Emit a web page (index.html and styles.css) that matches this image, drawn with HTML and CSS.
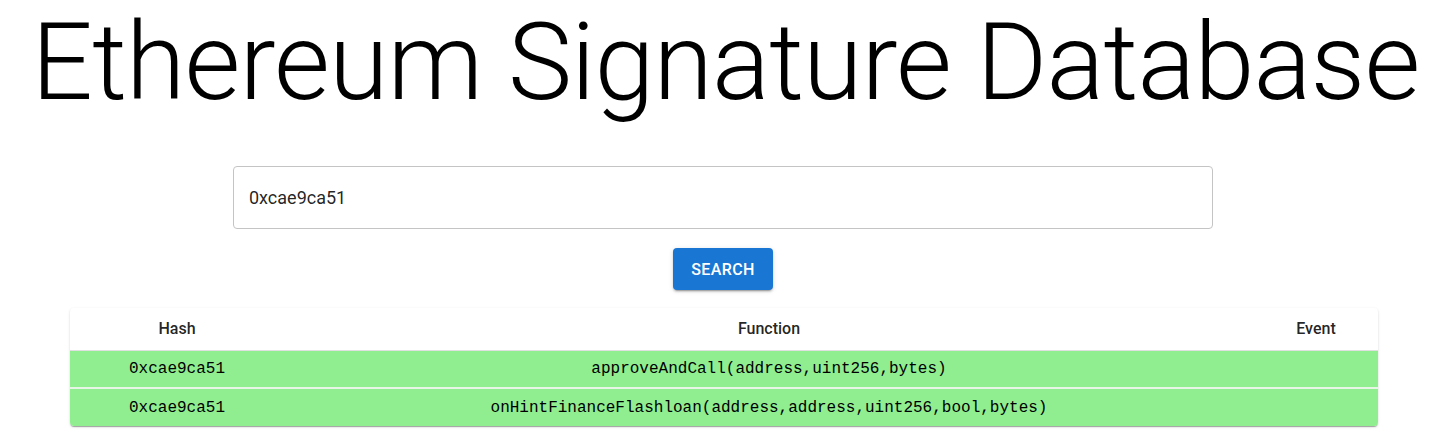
FILE: index.html
```html
<!DOCTYPE html>
<html>
<head>
<meta charset="utf-8">
<link rel="stylesheet" href="styles.css">
</head>
<body>
<div class="page">
  <h1 class="title">Ethereum Signature Database</h1>
  <div class="search">
    <div class="input">0xcae9ca51</div>
    <button class="btn">SEARCH</button>
  </div>
  <div class="paper">
    <table class="table">
      <colgroup><col class="c1"><col class="c2"><col class="c3"></colgroup>
      <thead>
        <tr><th>Hash</th><th>Function</th><th>Event</th></tr>
      </thead>
      <tbody>
        <tr class="hit"><td>0xcae9ca51</td><td>approveAndCall(address,uint256,bytes)</td><td></td></tr>
        <tr class="hit"><td>0xcae9ca51</td><td>onHintFinanceFlashloan(address,address,uint256,bool,bytes)</td><td></td></tr>
      </tbody>
    </table>
  </div>
</div>
</body>
</html>
```
FILE: styles.css
```css
* { box-sizing: border-box; }
html, body { margin: 0; padding: 0; background: #fff; }
body { font-family: Roboto, "Noto Sans", sans-serif; color: #000; }
.page { width: 1456px; height: 437px; overflow: hidden; }
.title {
  margin: 0;
  height: 148px;
  padding-right: 5px;
  font-weight: 300;
  font-size: 108px;
  line-height: 124px;
  text-align: center;
  letter-spacing: -0.85px;
}
.search { display: flex; flex-direction: column; align-items: center; padding-right: 10px; }
.input {
  margin-top: 18px;
  width: 980px;
  height: 63px;
  border: 1px solid #c4c4c4;
  border-radius: 4px;
  padding: 0 15px;
  display: flex;
  align-items: center;
  font-size: 18px;
  color: rgba(0,0,0,0.87);
}
.btn {
  margin-top: 19px;
  width: 100px;
  height: 42px;
  border: 0;
  border-radius: 4px;
  background: #1976d2;
  color: #fff;
  font-family: Roboto, sans-serif;
  font-weight: 500;
  font-size: 16px;
  letter-spacing: 0.4px;
  box-shadow: 0 3px 1px -2px rgba(0,0,0,0.2), 0 2px 2px 0 rgba(0,0,0,0.14), 0 1px 5px 0 rgba(0,0,0,0.12);
}
.paper {
  margin: 18px 78px 0 70px;
  border-radius: 4px;
  overflow: hidden;
  box-shadow: 0 2px 1px -1px rgba(0,0,0,0.2), 0 1px 1px 0 rgba(0,0,0,0.14), 0 1px 3px 0 rgba(0,0,0,0.12);
}
.table { width: 100%; border-collapse: collapse; table-layout: fixed; }
.c1 { width: 214px; }
.c3 { width: 124px; }
th {
  height: 42px;
  font-weight: 500;
  font-size: 16px;
  text-align: center;
  padding: 0;
  color: rgba(0,0,0,0.87);
  border-bottom: 1px solid #e0e0e0;
}
td {
  height: 38px;
  padding: 0;
  text-align: center;
  font-family: "Liberation Mono", "Courier New", monospace;
  font-size: 16px;
  color: #000;
  border-bottom: 2px solid #e6f5e6;
}
.hit { background: #90ee90; }
tbody tr:last-child td { border-bottom: 0; }
```
